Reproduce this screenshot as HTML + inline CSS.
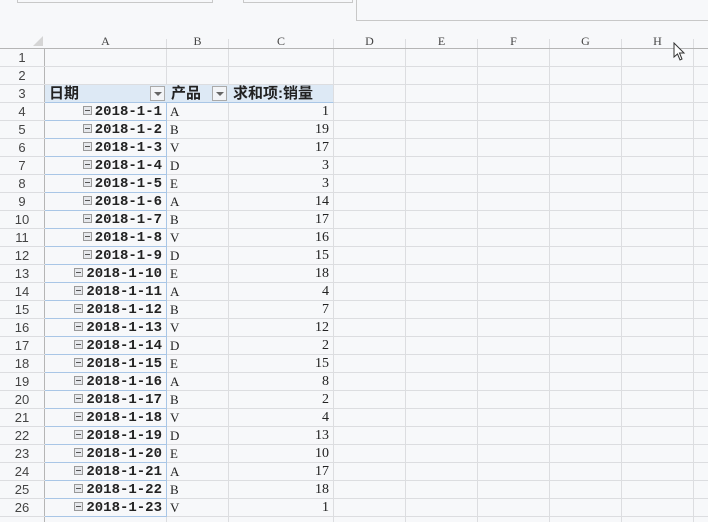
<!DOCTYPE html>
<html><head><meta charset="utf-8"><style>
*{box-sizing:border-box;margin:0;padding:0}
html,body{width:708px;height:522px;overflow:hidden}
body{background:#f7f8fa;position:relative;font-family:"Liberation Serif","Noto Serif CJK SC",serif;color:#222}
.r{position:absolute;left:0;height:18px;display:flex;width:708px;border-bottom:1px solid #dcdde0}
.c{height:17px;border-right:1px solid #dcdde0;font-size:13px;line-height:18px;overflow:hidden;white-space:nowrap}
.h{width:45px;text-align:center;color:#444;border-right:1px solid #b5b5b5;font-family:"Liberation Sans",sans-serif;font-size:13px}
.a{width:122px;text-align:right;padding-right:4px;font-family:"Liberation Mono",monospace;font-weight:bold;font-size:14px;border-right-color:#a9c6e6;line-height:19px}
.b{width:62px;padding-left:3px;font-family:"Liberation Serif",serif}
.cc{width:105px;text-align:right;padding-right:4px;font-family:"Liberation Serif",serif;font-size:14px}
.e{width:72px}
.m{display:inline-block;width:9px;height:9px;border:1px solid #999;background:#e6e8ec;position:relative;margin-right:3px;vertical-align:0px}
.m:after{content:"";position:absolute;left:1px;top:3px;width:5px;height:1px;background:#555}
.blue{border-bottom-color:#a9c6e6}
#rows .a{border-bottom:1px solid #a9c6e6;height:18px}
</style></head><body>
<div style="position:absolute;left:17px;top:-4px;width:196px;height:7px;border:1px solid #c8c8c8"></div>
<div style="position:absolute;left:243px;top:-4px;width:110px;height:7px;border:1px solid #c8c8c8"></div>
<div style="position:absolute;left:356px;top:-2px;width:360px;height:23px;border:1px solid #c8c8c8"></div>
<div style="position:absolute;left:0;top:31px;width:708px;height:18px;border-bottom:1px solid #b5b5b5;display:flex;font-size:12px;color:#444">
<div style="width:45px;position:relative"><div style="position:absolute;right:2px;bottom:2px;width:0;height:0;border-left:10px solid transparent;border-bottom:10px solid #d5d5d5"></div></div>
<div style="width:122px;text-align:center;border-right:1px solid #dcdde0;height:9px;margin-top:8px;line-height:4px">A</div>
<div style="width:62px;text-align:center;border-right:1px solid #dcdde0;height:9px;margin-top:8px;line-height:4px">B</div>
<div style="width:105px;text-align:center;border-right:1px solid #dcdde0;height:9px;margin-top:8px;line-height:4px">C</div>
<div style="width:72px;text-align:center;border-right:1px solid #dcdde0;height:9px;margin-top:8px;line-height:4px">D</div>
<div style="width:72px;text-align:center;border-right:1px solid #dcdde0;height:9px;margin-top:8px;line-height:4px">E</div>
<div style="width:72px;text-align:center;border-right:1px solid #dcdde0;height:9px;margin-top:8px;line-height:4px">F</div>
<div style="width:72px;text-align:center;border-right:1px solid #dcdde0;height:9px;margin-top:8px;line-height:4px">G</div>
<div style="width:72px;text-align:center;border-right:1px solid #dcdde0;height:9px;margin-top:8px;line-height:4px">H</div>
</div>
<div class="r" style="top:49px"><div class="c h">1</div><div class="c a" style="border-right-color:#dcdde0"></div><div class="c b"></div><div class="c cc"></div><div class="c e"></div><div class="c e"></div><div class="c e"></div><div class="c e"></div><div class="c e"></div></div>
<div class="r" style="top:67px"><div class="c h">2</div><div class="c a" style="border-right-color:#dcdde0"></div><div class="c b"></div><div class="c cc"></div><div class="c e"></div><div class="c e"></div><div class="c e"></div><div class="c e"></div><div class="c e"></div></div>
<div class="r" style="top:85px"><div class="c h">3</div>
<div class="c" style="width:289px;background:#dde9f5;border-bottom:1px solid #a9c6e6;height:18px;font-family:'Liberation Sans','Noto Sans CJK SC',sans-serif;font-weight:bold;font-size:15px;position:relative;border-right:1px solid #dcdde0">
<span style="position:absolute;left:4px;top:0">日期</span>
<span style="position:absolute;left:105px;top:1px;width:15px;height:15px;border:1px solid #aaa;background:#f2f4f7"><span style="position:absolute;left:3px;top:5px;border-left:4px solid transparent;border-right:4px solid transparent;border-top:4px solid #666"></span></span>
<span style="position:absolute;left:126px;top:0">产品</span>
<span style="position:absolute;left:167px;top:1px;width:15px;height:15px;border:1px solid #aaa;background:#f2f4f7"><span style="position:absolute;left:3px;top:5px;border-left:4px solid transparent;border-right:4px solid transparent;border-top:4px solid #666"></span></span>
<span style="position:absolute;left:188px;top:0">求和项:销量</span>
</div><div class="c e"></div><div class="c e"></div><div class="c e"></div><div class="c e"></div><div class="c e"></div></div>
<div id="rows">
<div class="r" style="top:103px"><div class="c h">4</div><div class="c a blue"><span class="m"></span>2018-1-1</div><div class="c b">A</div><div class="c cc">1</div><div class="c e"></div><div class="c e"></div><div class="c e"></div><div class="c e"></div><div class="c e"></div></div>
<div class="r" style="top:121px"><div class="c h">5</div><div class="c a"><span class="m"></span>2018-1-2</div><div class="c b">B</div><div class="c cc">19</div><div class="c e"></div><div class="c e"></div><div class="c e"></div><div class="c e"></div><div class="c e"></div></div>
<div class="r" style="top:139px"><div class="c h">6</div><div class="c a"><span class="m"></span>2018-1-3</div><div class="c b">V</div><div class="c cc">17</div><div class="c e"></div><div class="c e"></div><div class="c e"></div><div class="c e"></div><div class="c e"></div></div>
<div class="r" style="top:157px"><div class="c h">7</div><div class="c a"><span class="m"></span>2018-1-4</div><div class="c b">D</div><div class="c cc">3</div><div class="c e"></div><div class="c e"></div><div class="c e"></div><div class="c e"></div><div class="c e"></div></div>
<div class="r" style="top:175px"><div class="c h">8</div><div class="c a"><span class="m"></span>2018-1-5</div><div class="c b">E</div><div class="c cc">3</div><div class="c e"></div><div class="c e"></div><div class="c e"></div><div class="c e"></div><div class="c e"></div></div>
<div class="r" style="top:193px"><div class="c h">9</div><div class="c a"><span class="m"></span>2018-1-6</div><div class="c b">A</div><div class="c cc">14</div><div class="c e"></div><div class="c e"></div><div class="c e"></div><div class="c e"></div><div class="c e"></div></div>
<div class="r" style="top:211px"><div class="c h">10</div><div class="c a"><span class="m"></span>2018-1-7</div><div class="c b">B</div><div class="c cc">17</div><div class="c e"></div><div class="c e"></div><div class="c e"></div><div class="c e"></div><div class="c e"></div></div>
<div class="r" style="top:229px"><div class="c h">11</div><div class="c a"><span class="m"></span>2018-1-8</div><div class="c b">V</div><div class="c cc">16</div><div class="c e"></div><div class="c e"></div><div class="c e"></div><div class="c e"></div><div class="c e"></div></div>
<div class="r" style="top:247px"><div class="c h">12</div><div class="c a"><span class="m"></span>2018-1-9</div><div class="c b">D</div><div class="c cc">15</div><div class="c e"></div><div class="c e"></div><div class="c e"></div><div class="c e"></div><div class="c e"></div></div>
<div class="r" style="top:265px"><div class="c h">13</div><div class="c a"><span class="m"></span>2018-1-10</div><div class="c b">E</div><div class="c cc">18</div><div class="c e"></div><div class="c e"></div><div class="c e"></div><div class="c e"></div><div class="c e"></div></div>
<div class="r" style="top:283px"><div class="c h">14</div><div class="c a"><span class="m"></span>2018-1-11</div><div class="c b">A</div><div class="c cc">4</div><div class="c e"></div><div class="c e"></div><div class="c e"></div><div class="c e"></div><div class="c e"></div></div>
<div class="r" style="top:301px"><div class="c h">15</div><div class="c a"><span class="m"></span>2018-1-12</div><div class="c b">B</div><div class="c cc">7</div><div class="c e"></div><div class="c e"></div><div class="c e"></div><div class="c e"></div><div class="c e"></div></div>
<div class="r" style="top:319px"><div class="c h">16</div><div class="c a"><span class="m"></span>2018-1-13</div><div class="c b">V</div><div class="c cc">12</div><div class="c e"></div><div class="c e"></div><div class="c e"></div><div class="c e"></div><div class="c e"></div></div>
<div class="r" style="top:337px"><div class="c h">17</div><div class="c a"><span class="m"></span>2018-1-14</div><div class="c b">D</div><div class="c cc">2</div><div class="c e"></div><div class="c e"></div><div class="c e"></div><div class="c e"></div><div class="c e"></div></div>
<div class="r" style="top:355px"><div class="c h">18</div><div class="c a"><span class="m"></span>2018-1-15</div><div class="c b">E</div><div class="c cc">15</div><div class="c e"></div><div class="c e"></div><div class="c e"></div><div class="c e"></div><div class="c e"></div></div>
<div class="r" style="top:373px"><div class="c h">19</div><div class="c a"><span class="m"></span>2018-1-16</div><div class="c b">A</div><div class="c cc">8</div><div class="c e"></div><div class="c e"></div><div class="c e"></div><div class="c e"></div><div class="c e"></div></div>
<div class="r" style="top:391px"><div class="c h">20</div><div class="c a"><span class="m"></span>2018-1-17</div><div class="c b">B</div><div class="c cc">2</div><div class="c e"></div><div class="c e"></div><div class="c e"></div><div class="c e"></div><div class="c e"></div></div>
<div class="r" style="top:409px"><div class="c h">21</div><div class="c a"><span class="m"></span>2018-1-18</div><div class="c b">V</div><div class="c cc">4</div><div class="c e"></div><div class="c e"></div><div class="c e"></div><div class="c e"></div><div class="c e"></div></div>
<div class="r" style="top:427px"><div class="c h">22</div><div class="c a"><span class="m"></span>2018-1-19</div><div class="c b">D</div><div class="c cc">13</div><div class="c e"></div><div class="c e"></div><div class="c e"></div><div class="c e"></div><div class="c e"></div></div>
<div class="r" style="top:445px"><div class="c h">23</div><div class="c a"><span class="m"></span>2018-1-20</div><div class="c b">E</div><div class="c cc">10</div><div class="c e"></div><div class="c e"></div><div class="c e"></div><div class="c e"></div><div class="c e"></div></div>
<div class="r" style="top:463px"><div class="c h">24</div><div class="c a"><span class="m"></span>2018-1-21</div><div class="c b">A</div><div class="c cc">17</div><div class="c e"></div><div class="c e"></div><div class="c e"></div><div class="c e"></div><div class="c e"></div></div>
<div class="r" style="top:481px"><div class="c h">25</div><div class="c a"><span class="m"></span>2018-1-22</div><div class="c b">B</div><div class="c cc">18</div><div class="c e"></div><div class="c e"></div><div class="c e"></div><div class="c e"></div><div class="c e"></div></div>
<div class="r" style="top:499px"><div class="c h">26</div><div class="c a"><span class="m"></span>2018-1-23</div><div class="c b">V</div><div class="c cc">1</div><div class="c e"></div><div class="c e"></div><div class="c e"></div><div class="c e"></div><div class="c e"></div></div>
<div class="r" style="top:517px"><div class="c h"></div><div class="c a" style="border-right-color:#dcdde0"></div><div class="c b"></div><div class="c cc"></div><div class="c e"></div><div class="c e"></div><div class="c e"></div><div class="c e"></div><div class="c e"></div></div>
</div>
<svg style="position:absolute;left:673px;top:42px" width="14" height="20" viewBox="0 0 14 20"><path d="M1 1 L1 15 L4.5 12 L7 18 L9 17 L6.5 11 L11 11 Z" fill="#fff" stroke="#333" stroke-width="1"/></svg>
</body></html>
